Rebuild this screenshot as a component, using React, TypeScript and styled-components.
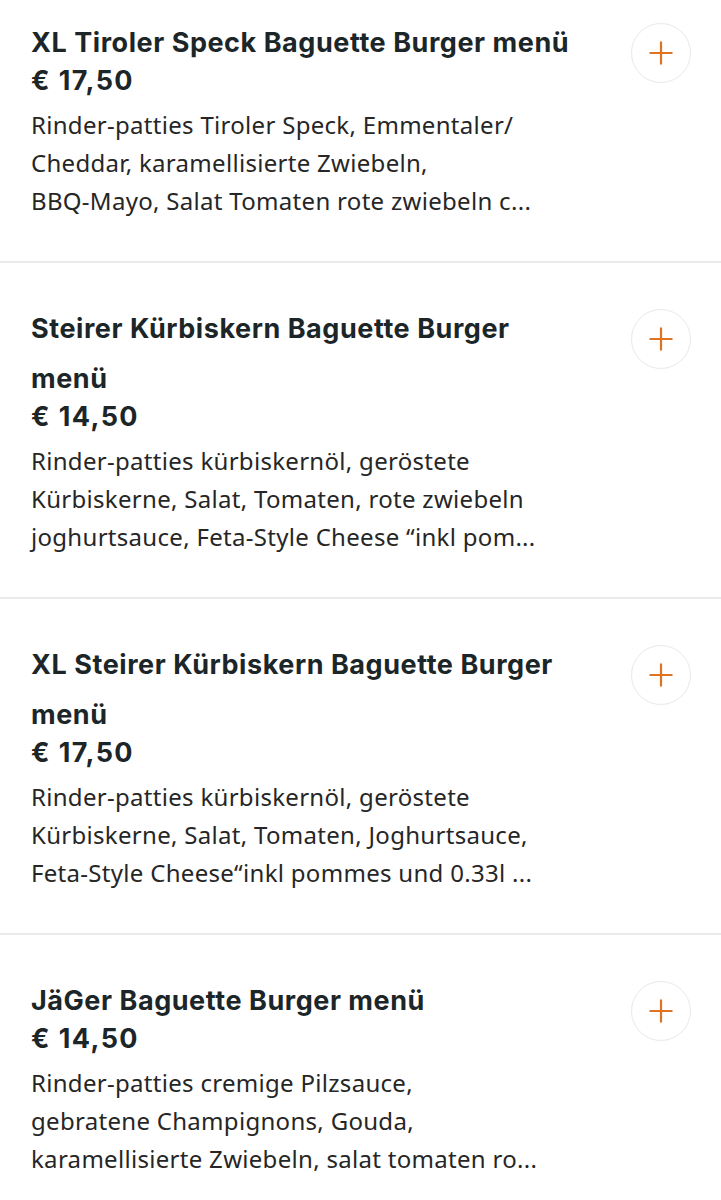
import React from 'react'
import styled, {createGlobalStyle} from 'styled-components'

type MenuItem = {
  title: string
  price: string
  lines: string[]
}

const items: MenuItem[] = [
  {
    title: 'XL Tiroler Speck Baguette Burger menü',
    price: '€ 17,50',
    lines: [
      'Rinder-patties Tiroler Speck, Emmentaler/',
      'Cheddar, karamellisierte Zwiebeln,',
      'BBQ-Mayo, Salat Tomaten rote zwiebeln c...',
    ],
  },
  {
    title: 'Steirer Kürbiskern Baguette Burger menü',
    price: '€ 14,50',
    lines: [
      'Rinder-patties kürbiskernöl, geröstete',
      'Kürbiskerne, Salat, Tomaten, rote zwiebeln',
      'joghurtsauce, Feta-Style Cheese “inkl pom...',
    ],
  },
  {
    title: 'XL Steirer Kürbiskern Baguette Burger menü',
    price: '€ 17,50',
    lines: [
      'Rinder-patties kürbiskernöl, geröstete',
      'Kürbiskerne, Salat, Tomaten, Joghurtsauce,',
      'Feta-Style Cheese“inkl pommes und 0.33l ...',
    ],
  },
  {
    title: 'JäGer Baguette Burger menü',
    price: '€ 14,50',
    lines: [
      'Rinder-patties cremige Pilzsauce,',
      'gebratene Champignons, Gouda,',
      'karamellisierte Zwiebeln, salat tomaten ro...',
    ],
  },
]

const GlobalStyle = createGlobalStyle`
  html, body {
    margin: 0;
    padding: 0;
    background: #ffffff;
  }
  body {
    overflow: hidden;
  }
`

const List = styled.main`
  display: flex;
  flex-direction: column;
  margin-top: -23px;
  background: #ffffff;
`

const Row = styled.article`
  display: flex;
  align-items: flex-start;
  gap: 20px;
  padding: 41px 30px 41px 31px;
  border-bottom: 2px solid #ebebeb;
`

const Info = styled.div`
  display: flex;
  flex-direction: column;
  width: 550px;
  color: #1c2628;
`

const Title = styled.h3`
  margin: 0;
  font-family: Inter, 'Liberation Sans', sans-serif;
  font-weight: 700;
  font-size: 27px;
  line-height: 50px;
  letter-spacing: 0.55px;
`

const Price = styled.div`
  font-family: Inter, 'Liberation Sans', sans-serif;
  font-weight: 700;
  font-size: 27px;
  line-height: 26px;
  letter-spacing: 1.4px;
`

const Description = styled.p`
  margin: 12px 0 0;
  font-family: 'Noto Sans', 'Open Sans', sans-serif;
  font-size: 24px;
  line-height: 38px;
  letter-spacing: 0.3px;
  color: #262626;

  span {
    display: block;
    white-space: nowrap;
  }
`

const AddButton = styled.button`
  flex: none;
  display: flex;
  align-items: center;
  justify-content: center;
  width: 60px;
  height: 60px;
  margin-top: 5px;
  margin-left: auto;
  padding: 0;
  border: 1.5px solid #e9e9e9;
  border-radius: 50%;
  background: #ffffff;
  cursor: pointer;
`

const PlusIcon = () => (
  <svg width="26" height="26" viewBox="0 0 26 26" fill="none">
    <path d="M13 1.5v23M1.5 13h23" stroke="#e07320" strokeWidth="2.2" strokeLinecap="butt" />
  </svg>
)

export default function App() {
  return (
    <>
      <GlobalStyle />
      <List>
        {items.map((item) => (
          <Row key={item.title}>
            <Info>
              <Title>{item.title}</Title>
              <Price>{item.price}</Price>
              <Description>
                {item.lines.map((line) => (
                  <span key={line}>{line}</span>
                ))}
              </Description>
            </Info>
            <AddButton aria-label="Hinzufügen">
              <PlusIcon />
            </AddButton>
          </Row>
        ))}
      </List>
    </>
  )
}
